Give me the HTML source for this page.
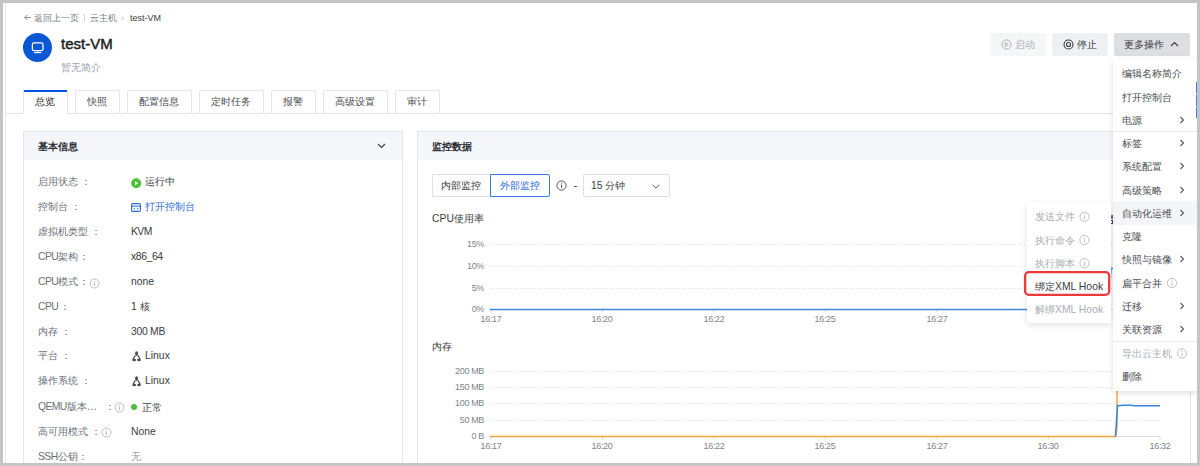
<!DOCTYPE html>
<html><head><meta charset="utf-8">
<style>
html,body{margin:0;padding:0;}
body{width:1200px;height:466px;background:#c4c4c4;position:relative;overflow:hidden;font-family:"Liberation Sans",sans-serif;color:#333;}
.a{position:absolute;}
.t{position:absolute;white-space:nowrap;font-size:10.4px;line-height:12px;}
.page{position:absolute;left:3px;top:3px;width:1194px;height:460px;background:#fff;overflow:hidden;}
.lbl{color:#6b7078;}
.val{color:#3a3d42;}
.l{letter-spacing:-0.6px;}
.bx{position:absolute;box-sizing:border-box;}
.mi{position:absolute;left:1122px;color:#4a4d52;font-size:10.4px;line-height:12px;white-space:nowrap;}
.arr{position:absolute;left:1180px;width:4px;height:6px;}
.grid{position:absolute;left:490px;width:670px;height:1px;background:repeating-linear-gradient(90deg,#d6d8dc 0 1px,transparent 1px 3px);}
.yl{position:absolute;width:60px;text-align:right;font-size:9px;line-height:10px;color:#80848a;white-space:nowrap;letter-spacing:-0.35px;}
.xl{position:absolute;width:40px;text-align:center;font-size:9px;line-height:10px;color:#80848a;white-space:nowrap;letter-spacing:-0.3px;}
</style></head><body>
<div class="page"></div>
<!-- left sidebar line -->
<div class="a" style="left:5px;top:3px;width:1px;height:460px;background:#e6e8ee"></div>

<!-- breadcrumb -->
<svg class="a" style="left:24px;top:14px" width="7" height="7" viewBox="0 0 7 7"><path d="M6.6 3.5 H0.8 M3.4 0.9 L0.8 3.5 L3.4 6.1" fill="none" stroke="#7a7f87" stroke-width="0.9"/></svg>
<div class="t" style="left:34px;top:12px;font-size:9px;color:#7a7f87">返回上一页</div>
<div class="a" style="left:84px;top:14px;width:1px;height:8px;background:#d5d8dd"></div>
<div class="t" style="left:90px;top:12px;font-size:9px;color:#7a7f87">云主机</div>
<div class="t" style="left:121px;top:12px;font-size:9px;color:#b0b4ba">›</div>
<div class="t" style="left:130px;top:12px;font-size:9px;color:#3a3d42">test-VM</div>

<!-- vm icon -->
<div class="a" style="left:23px;top:33px;width:29px;height:29px;border-radius:50%;background:#0a57d6"></div>
<svg class="a" style="left:23px;top:33px" width="29" height="29" viewBox="0 0 29 29">
<rect x="9.4" y="9.9" width="10.6" height="7.6" rx="1.6" fill="none" stroke="#fff" stroke-width="1.25"/>
<line x1="14.7" y1="17.5" x2="14.7" y2="19.5" stroke="#fff" stroke-width="1.2"/>
<line x1="11.2" y1="19.6" x2="18.2" y2="19.6" stroke="#fff" stroke-width="1.2"/>
</svg>
<div class="t" style="left:61px;top:35px;font-size:15px;line-height:18px;color:#1b1d21;-webkit-text-stroke:0.45px #1b1d21">test-VM</div>
<div class="t" style="left:61px;top:62px;font-size:10px;color:#9a9ea5">暂无简介</div>

<!-- top buttons -->
<div class="bx" style="left:990px;top:33px;width:56px;height:23px;background:#f5f6f8;border-radius:2px"></div>
<svg class="a" style="left:1001px;top:39px" width="11" height="11" viewBox="0 0 11 11"><circle cx="5.5" cy="5.5" r="4.6" fill="none" stroke="#a9adb3" stroke-width="1"/><path d="M4.3 3.5 L7.3 5.5 L4.3 7.5 Z" fill="none" stroke="#a9adb3" stroke-width="0.9"/></svg>
<div class="t" style="left:1015px;top:39px;color:#a9adb3">启动</div>
<div class="bx" style="left:1052px;top:33px;width:56px;height:23px;background:#eef0f3;border-radius:2px"></div>
<svg class="a" style="left:1063px;top:39px" width="11" height="11" viewBox="0 0 11 11"><circle cx="5.5" cy="5.5" r="4.5" fill="none" stroke="#3a3d42" stroke-width="1.1"/><circle cx="5.5" cy="5.5" r="2" fill="none" stroke="#3a3d42" stroke-width="1.1"/></svg>
<div class="t" style="left:1077px;top:39px;color:#3a3d42">停止</div>
<div class="bx" style="left:1114px;top:33px;width:76px;height:23px;background:#dcdee2;border-radius:2px"></div>
<div class="t" style="left:1124px;top:39px;color:#3a3d42">更多操作</div>
<svg class="a" style="left:1170px;top:41px" width="9" height="6" viewBox="0 0 9 6"><path d="M1 5 L4.5 1.5 L8 5" fill="none" stroke="#3a3d42" stroke-width="1.1"/></svg>

<!-- tabs -->
<div class="a" style="left:6px;top:113px;width:1191px;height:1px;background:#e3e6eb"></div>
<div class="bx" style="left:23px;top:89.5px;width:45px;height:24.5px;background:#fff;border:1px solid #e3e6eb;border-bottom:none;border-top:2px solid #0052d9;border-radius:2px 2px 0 0"></div>
<div class="t" style="left:35px;top:96px;color:#1b1d21">总览</div>
<div class="bx" style="left:75px;top:90px;width:45px;height:23px;border:1px solid #e3e6eb;border-bottom:none;border-radius:2px 2px 0 0"></div>
<div class="t" style="left:87px;top:96px;color:#4a4d52">快照</div>
<div class="bx" style="left:127px;top:90px;width:65px;height:23px;border:1px solid #e3e6eb;border-bottom:none;border-radius:2px 2px 0 0"></div>
<div class="t" style="left:139px;top:96px;color:#4a4d52">配置信息</div>
<div class="bx" style="left:199px;top:90px;width:65px;height:23px;border:1px solid #e3e6eb;border-bottom:none;border-radius:2px 2px 0 0"></div>
<div class="t" style="left:211px;top:96px;color:#4a4d52">定时任务</div>
<div class="bx" style="left:271px;top:90px;width:45px;height:23px;border:1px solid #e3e6eb;border-bottom:none;border-radius:2px 2px 0 0"></div>
<div class="t" style="left:283px;top:96px;color:#4a4d52">报警</div>
<div class="bx" style="left:323px;top:90px;width:65px;height:23px;border:1px solid #e3e6eb;border-bottom:none;border-radius:2px 2px 0 0"></div>
<div class="t" style="left:335px;top:96px;color:#4a4d52">高级设置</div>
<div class="bx" style="left:395px;top:90px;width:45px;height:23px;border:1px solid #e3e6eb;border-bottom:none;border-radius:2px 2px 0 0"></div>
<div class="t" style="left:407px;top:96px;color:#4a4d52">审计</div>

<!-- left panel -->
<div class="bx" style="left:23px;top:131px;width:380px;height:340px;border:1px solid #e3e6eb;"></div>
<div class="a" style="left:24px;top:132px;width:378px;height:28px;background:#f4f6f9"></div>
<div class="t" style="left:38px;top:140.5px;color:#2b2e33;font-weight:bold">基本信息</div>
<svg class="a" style="left:377px;top:143px" width="9" height="6" viewBox="0 0 9 6"><path d="M1 1 L4.5 4.5 L8 1" fill="none" stroke="#3a3d42" stroke-width="1.1"/></svg>

<!-- info rows -->
<div class="t lbl" style="left:38px;top:176px">启用状态 ：</div>
<svg class="a" style="left:131px;top:177.5px" width="11" height="11" viewBox="0 0 11 11"><circle cx="5.2" cy="5.2" r="5" fill="#4cc23a"/><path d="M4 3.2 L7.2 5.2 L4 7.2 Z" fill="#fff"/></svg>
<div class="t val" style="left:145px;top:176px">运行中</div>
<div class="t lbl" style="left:38px;top:201px">控制台 ：</div>
<svg class="a" style="left:131px;top:202.5px" width="10" height="9" viewBox="0 0 10 9"><rect x="0.6" y="0.6" width="8.8" height="7.8" rx="1.2" fill="none" stroke="#2a6bd8" stroke-width="1.1"/><line x1="0.6" y1="3.2" x2="9.4" y2="3.2" stroke="#2a6bd8" stroke-width="1"/><line x1="2.5" y1="5.8" x2="4" y2="5.8" stroke="#2a6bd8" stroke-width="1"/><line x1="6" y1="5.8" x2="7.5" y2="5.8" stroke="#2a6bd8" stroke-width="1"/></svg>
<div class="t val" style="left:145px;top:201px;color:#2a6bd8">打开控制台</div>
<div class="t lbl" style="left:38px;top:226px">虚拟机类型 ：</div>
<div class="t val" style="left:131px;top:225.5px"><span class="l">KVM</span></div>
<div class="t lbl" style="left:38px;top:251px"><span class="l">CPU</span>架构</div>
<div class="t lbl" style="left:79.4px;top:251px">：</div>
<div class="t val" style="left:131px;top:250.5px"><span style="letter-spacing:-0.4px">x86_64</span></div>
<div class="t lbl" style="left:38px;top:276px"><span class="l">CPU</span>模式</div>
<div class="t lbl" style="left:79.4px;top:276px">：</div>
<svg class="a" style="left:88.5px;top:277.5px" width="11" height="11" viewBox="0 0 11 11"><circle cx="5.5" cy="5.5" r="4.5" fill="none" stroke="#b0b4ba" stroke-width="0.9"/><line x1="5.5" y1="4.8" x2="5.5" y2="8" stroke="#b0b4ba" stroke-width="0.9"/><circle cx="5.5" cy="3.3" r="0.6" fill="#b0b4ba"/></svg>
<div class="t val" style="left:131px;top:275.5px">none</div>
<div class="t lbl" style="left:38px;top:301px"><span class="l">CPU</span></div>
<div class="t lbl" style="left:59.9px;top:301px">：</div>
<div class="t val" style="left:131px;top:301px">1 核</div>
<div class="t lbl" style="left:38px;top:326px">内存 ：</div>
<div class="t val" style="left:131px;top:325.5px"><span style="letter-spacing:-0.3px">300 MB</span></div>
<div class="t lbl" style="left:38px;top:350px">平台 ：</div>
<svg class="a" style="left:132px;top:350.5px" width="10" height="11" viewBox="0 0 10 11"><ellipse cx="4.6" cy="2.6" rx="1.5" ry="2.3" fill="#4a4d52"/><path d="M3.4 4.3 C2.3 5.7 1.3 7 1.3 8.5 M5.8 4.3 C6.9 5.7 7.9 7 7.9 8.5" fill="none" stroke="#4a4d52" stroke-width="1.3"/><ellipse cx="2.2" cy="9" rx="1.9" ry="1.2" fill="#4a4d52"/><ellipse cx="7" cy="9" rx="1.9" ry="1.2" fill="#4a4d52"/></svg>
<div class="t val" style="left:145px;top:349.5px">Linux</div>
<div class="t lbl" style="left:38px;top:375px">操作系统 ：</div>
<svg class="a" style="left:132px;top:375.5px" width="10" height="11" viewBox="0 0 10 11"><ellipse cx="4.6" cy="2.6" rx="1.5" ry="2.3" fill="#4a4d52"/><path d="M3.4 4.3 C2.3 5.7 1.3 7 1.3 8.5 M5.8 4.3 C6.9 5.7 7.9 7 7.9 8.5" fill="none" stroke="#4a4d52" stroke-width="1.3"/><ellipse cx="2.2" cy="9" rx="1.9" ry="1.2" fill="#4a4d52"/><ellipse cx="7" cy="9" rx="1.9" ry="1.2" fill="#4a4d52"/></svg>
<div class="t val" style="left:145px;top:374.5px">Linux</div>
<div class="t lbl" style="left:38px;top:401px"><span class="l">QEMU</span>版本…</div>
<div class="t lbl" style="left:104.6px;top:401px">：</div>
<svg class="a" style="left:113.5px;top:402px" width="11" height="11" viewBox="0 0 11 11"><circle cx="5.5" cy="5.5" r="4.5" fill="none" stroke="#b0b4ba" stroke-width="0.9"/><line x1="5.5" y1="4.8" x2="5.5" y2="8" stroke="#b0b4ba" stroke-width="0.9"/><circle cx="5.5" cy="3.3" r="0.6" fill="#b0b4ba"/></svg>
<div class="a" style="left:131px;top:403.5px;width:6px;height:6px;border-radius:50%;background:#4cc23a"></div>
<div class="t val" style="left:142px;top:402px">正常</div>
<div class="t lbl" style="left:38px;top:426px">高可用模式 ：</div>
<svg class="a" style="left:100.5px;top:427px" width="11" height="11" viewBox="0 0 11 11"><circle cx="5.5" cy="5.5" r="4.5" fill="none" stroke="#b0b4ba" stroke-width="0.9"/><line x1="5.5" y1="4.8" x2="5.5" y2="8" stroke="#b0b4ba" stroke-width="0.9"/><circle cx="5.5" cy="3.3" r="0.6" fill="#b0b4ba"/></svg>
<div class="t val" style="left:131px;top:425.5px">None</div>
<div class="t lbl" style="left:38px;top:451px"><span class="l">SSH</span>公钥</div>
<div class="t lbl" style="left:78.1px;top:451px">：</div>
<div class="t val" style="left:131px;top:451px;color:#9a9ea5">无</div>

<!-- right panel -->
<div class="bx" style="left:417px;top:131px;width:774px;height:340px;border:1px solid #e3e6eb;"></div>
<div class="a" style="left:418px;top:132px;width:772px;height:28px;background:#f4f6f9"></div>
<div class="t" style="left:432px;top:140.5px;color:#2b2e33;font-weight:bold">监控数据</div>

<div class="bx" style="left:432px;top:174px;width:59px;height:23px;border:1px solid #dcdfe4;border-right:none;border-radius:2px 0 0 2px"></div>
<div class="t" style="left:441px;top:180px;color:#3a3d42">内部监控</div>
<div class="bx" style="left:490px;top:174px;width:60px;height:23px;border:1px solid #3d7ee6;border-radius:0 2px 2px 0"></div>
<div class="t" style="left:500px;top:180px;color:#2a6bd8">外部监控</div>
<svg class="a" style="left:556px;top:180px" width="11" height="11" viewBox="0 0 11 11"><circle cx="5.5" cy="5.5" r="4.6" fill="none" stroke="#55595f" stroke-width="1"/><line x1="5.5" y1="4.6" x2="5.5" y2="8" stroke="#55595f" stroke-width="1"/><circle cx="5.5" cy="3.1" r="0.6" fill="#55595f"/></svg>
<div class="a" style="left:574px;top:186px;width:3px;height:1px;background:#55595f"></div>
<div class="bx" style="left:583px;top:174px;width:87px;height:23px;border:1px solid #dcdfe4;border-radius:2px"></div>
<div class="t" style="left:591px;top:180px;color:#3a3d42">15 分钟</div>
<svg class="a" style="left:652px;top:184px" width="8" height="5" viewBox="0 0 8 5"><path d="M0.6 0.8 L4 4.2 L7.4 0.8" fill="none" stroke="#55595f" stroke-width="1"/></svg>

<!-- CPU chart -->
<div class="t" style="left:432px;top:213px;color:#3a3d42">CPU使用率</div>
<div class="yl" style="left:424px;top:239px">15%</div>
<div class="yl" style="left:424px;top:261px">10%</div>
<div class="yl" style="left:424px;top:283px">5%</div>
<div class="yl" style="left:424px;top:304px">0%</div>
<svg class="a" style="left:0;top:0" width="1200" height="466"><g stroke="#dcdfe3" stroke-width="1.2" stroke-dasharray="1 2"><line x1="490" y1="244.5" x2="1160" y2="244.5"/><line x1="490" y1="266.5" x2="1160" y2="266.5"/><line x1="490" y1="288.5" x2="1160" y2="288.5"/></g><line x1="490" y1="309.5" x2="1160" y2="309.5" stroke="#dcdfe4" stroke-width="1"/><g stroke="#d3d6db" stroke-width="1"><line x1="491" y1="309.5" x2="491" y2="312.5"/><line x1="602.5" y1="309.5" x2="602.5" y2="312.5"/><line x1="714" y1="309.5" x2="714" y2="312.5"/><line x1="825.5" y1="309.5" x2="825.5" y2="312.5"/><line x1="937" y1="309.5" x2="937" y2="312.5"/><line x1="1048.5" y1="309.5" x2="1048.5" y2="312.5"/><line x1="1160" y1="309.5" x2="1160" y2="312.5"/></g><polyline points="490,309.5 1109,309.5 1111,268.5 1160,268.5" fill="none" stroke="#3a86e8" stroke-width="1.3"/></svg>
<div class="xl" style="left:471px;top:314px">16:17</div>
<div class="xl" style="left:582px;top:314px">16:20</div>
<div class="xl" style="left:694px;top:314px">16:22</div>
<div class="xl" style="left:805px;top:314px">16:25</div>
<div class="xl" style="left:917px;top:314px">16:27</div>
<div class="xl" style="left:1028px;top:314px">16:30</div>
<div class="xl" style="left:1140px;top:314px">16:32</div>

<!-- Memory chart -->
<div class="t" style="left:432px;top:341px;color:#3a3d42">内存</div>
<div class="yl" style="left:424px;top:366px">200 MB</div>
<div class="yl" style="left:424px;top:382px">150 MB</div>
<div class="yl" style="left:424px;top:398px">100 MB</div>
<div class="yl" style="left:424px;top:415px">50 MB</div>
<div class="yl" style="left:424px;top:431px">0 B</div>
<svg class="a" style="left:0;top:0" width="1200" height="466"><g stroke="#dcdfe3" stroke-width="1.2" stroke-dasharray="1 2"><line x1="490" y1="371.5" x2="1160" y2="371.5"/><line x1="490" y1="387.5" x2="1160" y2="387.5"/><line x1="490" y1="403.5" x2="1160" y2="403.5"/><line x1="490" y1="420.5" x2="1160" y2="420.5"/></g><line x1="490" y1="436.5" x2="1160" y2="436.5" stroke="#dcdfe4" stroke-width="1"/><g stroke="#d3d6db" stroke-width="1"><line x1="491" y1="436.5" x2="491" y2="439.5"/><line x1="602.5" y1="436.5" x2="602.5" y2="439.5"/><line x1="714" y1="436.5" x2="714" y2="439.5"/><line x1="825.5" y1="436.5" x2="825.5" y2="439.5"/><line x1="937" y1="436.5" x2="937" y2="439.5"/><line x1="1048.5" y1="436.5" x2="1048.5" y2="439.5"/><line x1="1160" y1="436.5" x2="1160" y2="439.5"/></g><polyline points="490,436.5 1115.5,436.5 1117,428 1117,370" fill="none" stroke="#f2a33a" stroke-width="1.4"/><polyline points="1115.5,436.5 1117.5,405.8 1124,405.3 1131,405.2 1134,405.8 1160,405.8" fill="none" stroke="#3a86e8" stroke-width="1.6"/></svg>
<div class="xl" style="left:471px;top:441px">16:17</div>
<div class="xl" style="left:582px;top:441px">16:20</div>
<div class="xl" style="left:694px;top:441px">16:22</div>
<div class="xl" style="left:805px;top:441px">16:25</div>
<div class="xl" style="left:917px;top:441px">16:27</div>
<div class="xl" style="left:1028px;top:441px">16:30</div>
<div class="xl" style="left:1140px;top:441px">16:32</div>

<!-- peek glyph between menus -->
<div class="a" style="left:1111px;top:215px;width:3px;height:4px;background:#6a6d72;border-radius:1px"></div>
<div class="a" style="left:1111px;top:220px;width:3px;height:1px;background:#44474c"></div><div class="a" style="left:1112px;top:221px;width:1px;height:2px;background:#44474c"></div><div class="a" style="left:1111px;top:223px;width:3px;height:1px;background:#44474c"></div>
<!-- dropdown menu -->
<div class="a" style="left:1113px;top:58px;width:90px;height:333px;background:#fff;box-shadow:0 2px 6px rgba(0,0,0,0.12)"></div>
<div class="mi" style="top:68px">编辑名称简介</div>
<div class="mi" style="top:92px">打开控制台</div>
<div class="mi" style="top:115px">电源</div>
<div class="a" style="left:1113px;top:131px;width:84px;height:1px;background:#e8eaee"></div>
<div class="mi" style="top:138px">标签</div>
<div class="mi" style="top:161px">系统配置</div>
<div class="mi" style="top:185px">高级策略</div>
<div class="a" style="left:1113px;top:201px;width:84px;height:24px;background:#f3f5f8"></div>
<div class="mi" style="top:208px">自动化运维</div>
<div class="mi" style="top:231px">克隆</div>
<div class="mi" style="top:254px">快照与镜像</div>
<div class="mi" style="top:278px">扁平合并</div>
<div class="mi" style="top:301px">迁移</div>
<div class="mi" style="top:324px">关联资源</div>
<div class="a" style="left:1113px;top:341px;width:84px;height:1px;background:#e8eaee"></div>
<div class="mi" style="top:348px;color:#a9adb3">导出云主机</div>
<div class="mi" style="top:371px">删除</div>
<svg class="a" style="left:0;top:0" width="1200" height="466">
<g fill="none" stroke="#55595f" stroke-width="1.1">
<path d="M1180.5 117 L1183.5 120 L1180.5 123"/>
<path d="M1180.5 140 L1183.5 143 L1180.5 146"/>
<path d="M1180.5 163 L1183.5 166 L1180.5 169"/>
<path d="M1180.5 187 L1183.5 190 L1180.5 193"/>
<path d="M1180.5 210 L1183.5 213 L1180.5 216"/>
<path d="M1180.5 256 L1183.5 259 L1180.5 262"/>
<path d="M1180.5 303 L1183.5 306 L1180.5 309"/>
<path d="M1180.5 326 L1183.5 329 L1180.5 332"/>
</g>
<g><circle cx="1172" cy="283" r="4.6" fill="none" stroke="#b5b9bf" stroke-width="0.9"/><line x1="1172" y1="282.4" x2="1172" y2="285.6" stroke="#b5b9bf" stroke-width="0.9"/><circle cx="1172" cy="280.9" r="0.55" fill="#b5b9bf"/></g><g><circle cx="1182" cy="353.5" r="4.6" fill="none" stroke="#b5b9bf" stroke-width="0.9"/><line x1="1182" y1="352.9" x2="1182" y2="356.1" stroke="#b5b9bf" stroke-width="0.9"/><circle cx="1182" cy="351.4" r="0.55" fill="#b5b9bf"/></g>
</svg>

<!-- submenu -->
<div class="a" style="left:1027px;top:202px;width:84px;height:121px;background:#fff;box-shadow:0 2px 6px rgba(0,0,0,0.12)"></div>
<div class="mi" style="left:1035px;top:211px;color:#a9adb3">发送文件</div>
<div class="mi" style="left:1035px;top:235px;color:#a9adb3">执行命令</div>
<div class="mi" style="left:1035px;top:258px;color:#a9adb3">执行脚本</div>
<div class="mi" style="left:1035px;top:281px;color:#3a3d42">绑定XML Hook</div>
<div class="mi" style="left:1035px;top:304px;color:#a9adb3">解绑XML Hook</div>
<svg class="a" style="left:0;top:0" width="1200" height="466">
<g><circle cx="1084.5" cy="216.8" r="4.6" fill="none" stroke="#b5b9bf" stroke-width="0.9"/><line x1="1084.5" y1="216.20000000000002" x2="1084.5" y2="219.4" stroke="#b5b9bf" stroke-width="0.9"/><circle cx="1084.5" cy="214.70000000000002" r="0.55" fill="#b5b9bf"/></g><g><circle cx="1084.5" cy="240" r="4.6" fill="none" stroke="#b5b9bf" stroke-width="0.9"/><line x1="1084.5" y1="239.4" x2="1084.5" y2="242.6" stroke="#b5b9bf" stroke-width="0.9"/><circle cx="1084.5" cy="237.9" r="0.55" fill="#b5b9bf"/></g><g><circle cx="1084.5" cy="263.2" r="4.6" fill="none" stroke="#b5b9bf" stroke-width="0.9"/><line x1="1084.5" y1="262.59999999999997" x2="1084.5" y2="265.8" stroke="#b5b9bf" stroke-width="0.9"/><circle cx="1084.5" cy="261.09999999999997" r="0.55" fill="#b5b9bf"/></g>
<rect x="1025.1" y="272.2" width="84.1" height="22.6" rx="3.8" fill="none" stroke="#ec3a3c" stroke-width="2.3"/>
</svg>

<!-- focus artifact -->
<div class="a" style="left:1196px;top:82px;width:1px;height:36px;background:repeating-linear-gradient(180deg,#3d86ea 0 11px,#9cc2f3 11px 13px)"></div>
<!-- frame overlay -->
<div class="a" style="left:0;top:0;width:1200px;height:3px;background:#c4c4c4"></div>
<div class="a" style="left:0;top:463px;width:1200px;height:3px;background:#c4c4c4"></div>
<div class="a" style="left:0;top:0;width:3px;height:466px;background:#c4c4c4"></div>
<div class="a" style="left:1197px;top:0;width:3px;height:466px;background:#c4c4c4"></div>
</body></html>
